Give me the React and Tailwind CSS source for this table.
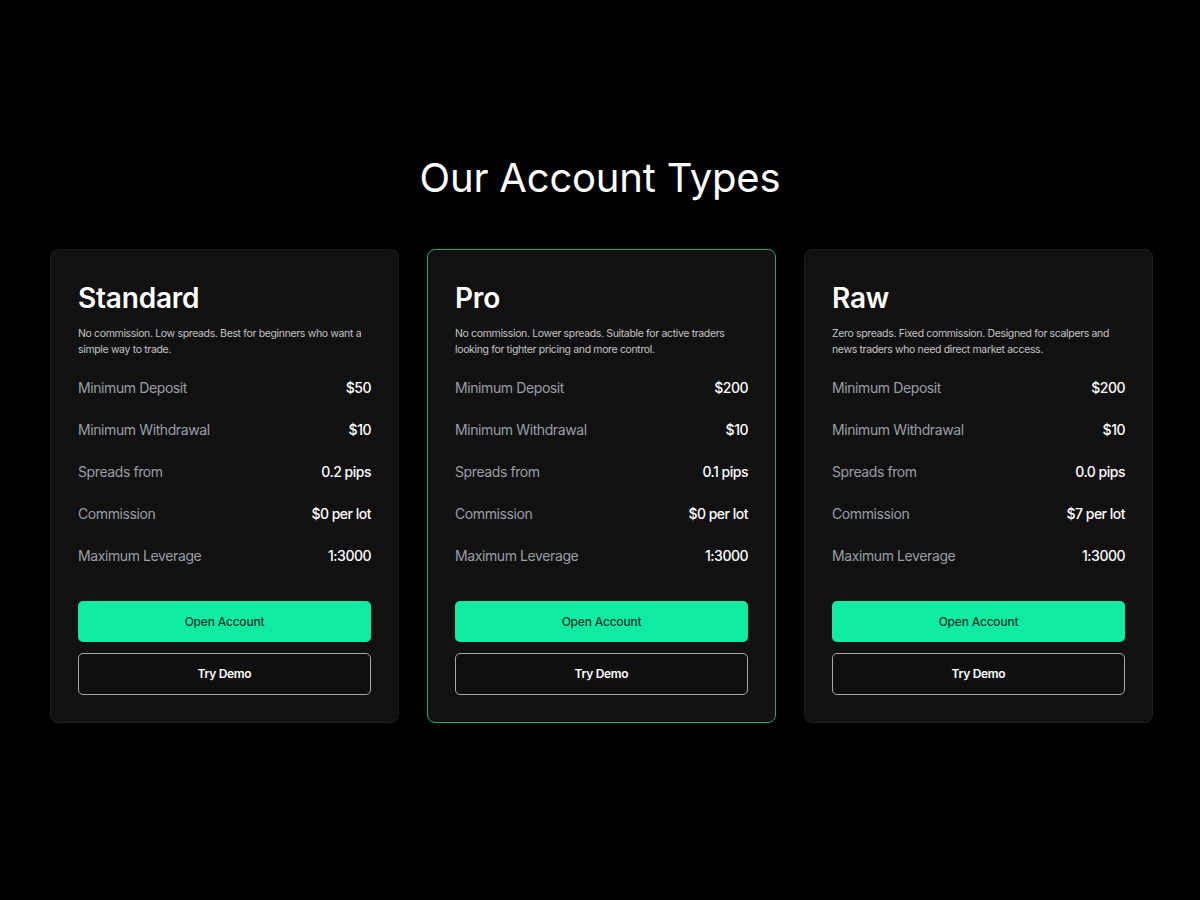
import React from "react";

const accounts = [
  {
    name: "Standard",
    desc: "No commission. Low spreads. Best for beginners who want a simple way to trade.",
    rows: [
      ["Minimum Deposit", "$50"],
      ["Minimum Withdrawal", "$10"],
      ["Spreads from", "0.2 pips"],
      ["Commission", "$0 per lot"],
      ["Maximum Leverage", "1:3000"],
    ],
    featured: false,
  },
  {
    name: "Pro",
    desc: "No commission. Lower spreads. Suitable for active traders looking for tighter pricing and more control.",
    rows: [
      ["Minimum Deposit", "$200"],
      ["Minimum Withdrawal", "$10"],
      ["Spreads from", "0.1 pips"],
      ["Commission", "$0 per lot"],
      ["Maximum Leverage", "1:3000"],
    ],
    featured: true,
  },
  {
    name: "Raw",
    desc: "Zero spreads. Fixed commission. Designed for scalpers and news traders who need direct market access.",
    rows: [
      ["Minimum Deposit", "$200"],
      ["Minimum Withdrawal", "$10"],
      ["Spreads from", "0.0 pips"],
      ["Commission", "$7 per lot"],
      ["Maximum Leverage", "1:3000"],
    ],
    featured: false,
  },
];

function Card({ a }) {
  return (
    <div
      className={
        "flex flex-col self-start rounded-[8px] border bg-[#111111] px-[27px] pt-[30px] pb-[27px] " +
        (a.featured ? "border-[#22a874]" : "border-[#1e1e1e]")
      }
    >
      <h3 className="text-[28px] leading-[36px] font-semibold text-white tracking-[-0.2px]">{a.name}</h3>
      <p className="mt-[10px] text-[10.5px] leading-[16px] tracking-[-0.35px] text-[#c4c4c4]">{a.desc}</p>
      <div className="mt-[8px] flex flex-col">
        {a.rows.map(([k, v]) => (
          <div key={k} className="flex h-[42px] items-center justify-between">
            <span className="text-[14px] tracking-[-0.4px] text-[#9a9fa6]">{k}</span>
            <span className="text-[14px] font-medium tracking-[-0.5px] text-white">{v}</span>
          </div>
        ))}
      </div>
      <button className="mt-[25px] h-[41px] w-full rounded-[5px] bg-[#10eba4] text-[12px] font-medium tracking-[-0.2px] text-[#0c3b2a]">
        Open Account
      </button>
      <button className="mt-[11px] h-[42px] w-full rounded-[5px] border border-[#a8a8a8] bg-[#0f0f0f] text-[12px] font-semibold tracking-[-0.3px] text-white">
        Try Demo
      </button>
    </div>
  );
}

export default function App() {
  return (
    <div
      className="min-h-[900px] w-full bg-black pt-[154px]"
      style={{ fontFamily: "Inter, 'Noto Sans', sans-serif" }}
    >
      <h2 className="text-center text-[40px] leading-[48px] font-normal text-white tracking-[-0.2px]">
        Our Account Types
      </h2>
      <div className="ml-[50px] mt-[47px] grid w-[1103px] grid-cols-3 gap-[28px]">
        {accounts.map((a) => (
          <Card key={a.name} a={a} />
        ))}
      </div>
    </div>
  );
}
